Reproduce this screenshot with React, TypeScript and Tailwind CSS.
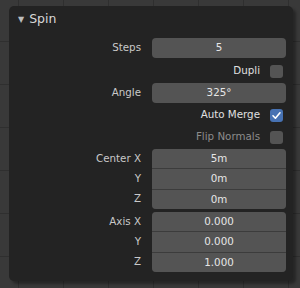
import React from 'react';

const font = { fontFamily: '"DejaVu Sans", "Liberation Sans", sans-serif' };

function Label({ children }: { children: React.ReactNode }) {
  return <div className="w-[133px] shrink-0 text-right pr-[1px] text-[#c9c9c9]">{children}</div>;
}

function Field({ value }: { value: string }) {
  return (
    <div className="flex h-[20px] w-[134px] items-center justify-center rounded-[4px] bg-[#545454] text-[#e6e6e6]">
      {value}
    </div>
  );
}

function Check({ label, checked, dim }: { label: string; checked?: boolean; dim?: boolean }) {
  return (
    <div className="flex h-[20px] items-center">
      <div className="w-[133px] shrink-0" />
      <div className="ml-[10px] flex w-[134px] items-center justify-end gap-[10px] pr-[3px]">
        <span className={dim ? 'text-[#8c8c8c]' : 'text-[#e0e0e0]'}>{label}</span>
        <div
          className={`flex h-[13px] w-[13px] items-center justify-center rounded-[3px] ${
            checked ? 'bg-[#4772b3]' : 'bg-[#545454]'
          }`}
        >
          {checked && (
            <svg width="11" height="11" viewBox="0 0 11 11">
              <path d="M2 5.8 L4.4 8.2 L9 2.8" fill="none" stroke="#ffffff" strokeWidth="1.6" strokeLinecap="round" strokeLinejoin="round" />
            </svg>
          )}
        </div>
      </div>
    </div>
  );
}

function Column({ labels, values }: { labels: string[]; values: string[] }) {
  return (
    <div className="flex">
      <div className="flex flex-col">
        {labels.map((l, i) => (
          <div key={i} className="flex h-[20px] items-center">
            <Label>{l}</Label>
          </div>
        ))}
      </div>
      <div className="ml-[10px] flex h-[60px] w-[134px] flex-col gap-px overflow-hidden rounded-[4px] bg-[#3c3c3c]">
        {values.map((v, i) => (
          <div key={i} className="flex flex-1 items-center justify-center bg-[#545454] text-[#e6e6e6]">
            {v}
          </div>
        ))}
      </div>
    </div>
  );
}

export default function App() {
  return (
    <div
      className="h-[288px] w-[300px] overflow-hidden bg-[#393939] bg-[linear-gradient(to_right,#2f2f2f_1px,transparent_1px),linear-gradient(to_bottom,#2f2f2f_1px,transparent_1px)] bg-[size:45px_43px] bg-[position:18px_-2px] pl-[9px] pt-[6px] text-[10.3px]"
      style={font}
    >
      <div className="h-[275px] w-[284px] rounded-[5px] bg-[#232323] shadow-[3px_3px_3px_rgba(0,0,0,0.35)]">
        {/* Header */}
        <div className="flex h-[26px] items-center pl-[9px] pt-[1px]">
          <span className="text-[8px] text-[#bdbdbd]">▼</span>
          <span className="ml-[5px] text-[12.5px] text-[#d8d8d8]">Spin</span>
        </div>

        <div className="mt-[6px] flex flex-col">
          <div className="flex h-[20px] items-center">
            <Label>Steps</Label>
            <div className="ml-[10px]"><Field value="5" /></div>
          </div>
          <div className="mt-[3px]"><Check label="Dupli" /></div>
          <div className="mt-[2px] flex h-[20px] items-center">
            <Label>Angle</Label>
            <div className="ml-[10px]"><Field value="325°" /></div>
          </div>
          <div className="mt-[2px]"><Check label="Auto Merge" checked /></div>
          <div className="mt-[2px]"><Check label="Flip Normals" dim /></div>
          <div className="mt-[2px]">
            <Column labels={['Center X', 'Y', 'Z']} values={['5m', '0m', '0m']} />
          </div>
          <div className="mt-[3px]">
            <Column labels={['Axis X', 'Y', 'Z']} values={['0.000', '0.000', '1.000']} />
          </div>
        </div>
      </div>
    </div>
  );
}
